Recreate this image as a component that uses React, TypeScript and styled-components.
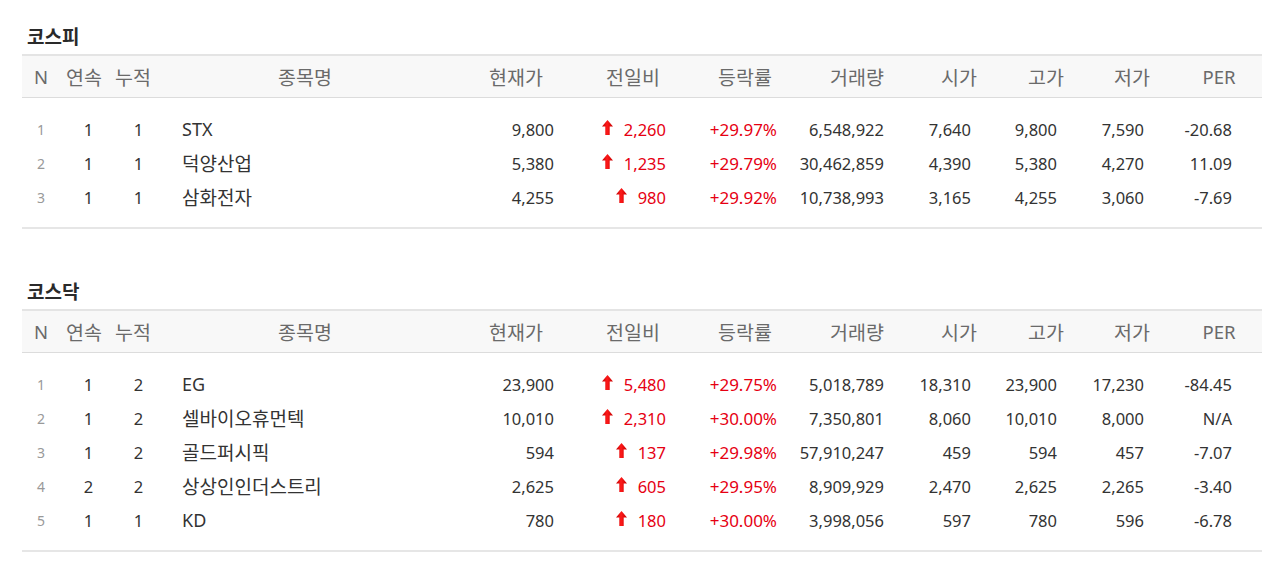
import React from "react";
import styled, { createGlobalStyle } from "styled-components";

const GlobalStyle = createGlobalStyle`
  html, body { margin: 0; padding: 0; background: #fff; }
  body { font-family: "Noto Sans", "Noto Sans CJK KR", sans-serif; }
`;

type Align = "left" | "center" | "right";
interface Col {
  key: string;
  label: string;
  width: number;
  align: Align;
  pad: number;
}

const COLS: Col[] = [
  { key: "n", label: "N", width: 38, align: "center", pad: 0 },
  { key: "streak", label: "연속", width: 48, align: "center", pad: 9 },
  { key: "total", label: "누적", width: 50, align: "center", pad: 11 },
  { key: "name", label: "종목명", width: 294, align: "left", pad: 24 },
  { key: "price", label: "현재가", width: 128, align: "right", pad: 26 },
  { key: "diff", label: "전일비", width: 106, align: "right", pad: 20 },
  { key: "rate", label: "등락률", width: 118, align: "right", pad: 27 },
  { key: "vol", label: "거래량", width: 106, align: "right", pad: 26 },
  { key: "open", label: "시가", width: 98, align: "right", pad: 37 },
  { key: "high", label: "고가", width: 76, align: "right", pad: 27 },
  { key: "low", label: "저가", width: 96, align: "right", pad: 36 },
  { key: "per", label: "PER", width: 78, align: "right", pad: 26 },
];

const TEMPLATE = COLS.map((c) => `${c.width}px`).join(" ");

type Row = string[];

const KOSPI: Row[] = [
  ["1", "1", "1", "STX", "9,800", "2,260", "+29.97%", "6,548,922", "7,640", "9,800", "7,590", "-20.68"],
  ["2", "1", "1", "덕양산업", "5,380", "1,235", "+29.79%", "30,462,859", "4,390", "5,380", "4,270", "11.09"],
  ["3", "1", "1", "삼화전자", "4,255", "980", "+29.92%", "10,738,993", "3,165", "4,255", "3,060", "-7.69"],
];

const KOSDAQ: Row[] = [
  ["1", "1", "2", "EG", "23,900", "5,480", "+29.75%", "5,018,789", "18,310", "23,900", "17,230", "-84.45"],
  ["2", "1", "2", "셀바이오휴먼텍", "10,010", "2,310", "+30.00%", "7,350,801", "8,060", "10,010", "8,000", "N/A"],
  ["3", "1", "2", "골드퍼시픽", "594", "137", "+29.98%", "57,910,247", "459", "594", "457", "-7.07"],
  ["4", "2", "2", "상상인인더스트리", "2,625", "605", "+29.95%", "8,909,929", "2,470", "2,625", "2,265", "-3.40"],
  ["5", "1", "1", "KD", "780", "180", "+30.00%", "3,998,056", "597", "780", "596", "-6.78"],
];

const isKorean = (s: string) => /[\uac00-\ud7a3]/.test(s);

const Page = styled.div`
  padding: 27px 18px 0 22px;
  width: 1240px;
`;

const Section = styled.section<{ $gap: number }>`
  margin-top: ${(p) => p.$gap}px;
`;

const Title = styled.h2`
  margin: 0 0 7px 5px;
  font-size: 19px;
  line-height: 20px;
  font-weight: 600;
  color: #2a2a2a;
`;

const Table = styled.div`
  width: 1240px;
  border-bottom: 2px solid #e6e6e6;
`;

const HeadRow = styled.div`
  display: grid;
  grid-template-columns: ${TEMPLATE} 1fr;
  height: 41px;
  align-items: center;
  background: #f8f8f8;
  border-top: 2px solid #e4e4e4;
  border-bottom: 1px solid #dcdcdc;
`;

const HeadCell = styled.div<{ $ko: boolean }>`
  text-align: center;
  font-size: ${(p) => (p.$ko ? 19.5 : 18.5)}px;
  color: #6a6a6a;
  white-space: nowrap;
`;

const Body = styled.div`
  padding: 14px 0 13px;
`;

const DataRow = styled.div`
  display: grid;
  grid-template-columns: ${TEMPLATE} 1fr;
  height: 34px;
  align-items: center;
`;

const Cell = styled.div<{ $align: Align; $pad: number; $red?: boolean; $muted?: boolean; $size: number }>`
  display: flex;
  align-items: center;
  justify-content: ${(p) => (p.$align === "right" ? "flex-end" : p.$align === "center" ? "center" : "flex-start")};
  padding-left: ${(p) => (p.$align === "right" ? 0 : p.$pad)}px;
  padding-right: ${(p) => (p.$align === "right" ? p.$pad : 0)}px;
  font-size: ${(p) => p.$size}px;
  color: ${(p) => (p.$red ? "#e60012" : p.$muted ? "#999" : "#333")};
  white-space: nowrap;
  min-width: 0;
`;

const Arrow = styled.svg`
  flex: none;
  width: 11px;
  height: 15px;
  margin-right: 11px;
  margin-top: -4px;
`;

const UpArrow: React.FC<{ id: string }> = ({ id }) => (
  <Arrow viewBox="0 0 11 15" aria-hidden="true">
    <defs>
      <linearGradient id={id} x1="0" y1="0" x2="1" y2="0">
        <stop offset="0" stopColor="#c00000" />
        <stop offset="0.45" stopColor="#ff1a1a" />
        <stop offset="1" stopColor="#c40000" />
      </linearGradient>
    </defs>
    <path d="M5.5 0 L11 6.4 L7.7 6.4 L7.7 15 L3.3 15 L3.3 6.4 L0 6.4 Z" fill={`url(#${id})`} />
  </Arrow>
);

const sizeFor = (key: string, text: string) => {
  if (key === "n") return 14;
  if (key === "name") return isKorean(text) ? 19 : 18;
  if (key === "rate") return 17;
  return 16.5;
};

const StockTable: React.FC<{ title: string; rows: Row[]; gap: number; id: string }> = ({ title, rows, gap, id }) => (
  <Section $gap={gap}>
    <Title>{title}</Title>
    <Table>
      <HeadRow>
        {COLS.map((c) => (
          <HeadCell key={c.key} $ko={isKorean(c.label)}>
            {c.label}
          </HeadCell>
        ))}
      </HeadRow>
      <Body>
        {rows.map((r, ri) => (
          <DataRow key={ri}>
            {COLS.map((c, ci) => {
              const red = c.key === "diff" || c.key === "rate";
              return (
                <Cell
                  key={c.key}
                  $align={c.align}
                  $pad={c.pad}
                  $red={red}
                  $muted={c.key === "n"}
                  $size={sizeFor(c.key, r[ci])}
                >
                  {c.key === "diff" && <UpArrow id={`${id}-a${ri}`} />}
                  <span>{r[ci]}</span>
                </Cell>
              );
            })}
          </DataRow>
        ))}
      </Body>
    </Table>
  </Section>
);

export default function App() {
  return (
    <>
      <GlobalStyle />
      <Page>
        <StockTable title="코스피" rows={KOSPI} gap={0} id="kospi" />
        <StockTable title="코스닥" rows={KOSDAQ} gap={53} id="kosdaq" />
      </Page>
    </>
  );
}
